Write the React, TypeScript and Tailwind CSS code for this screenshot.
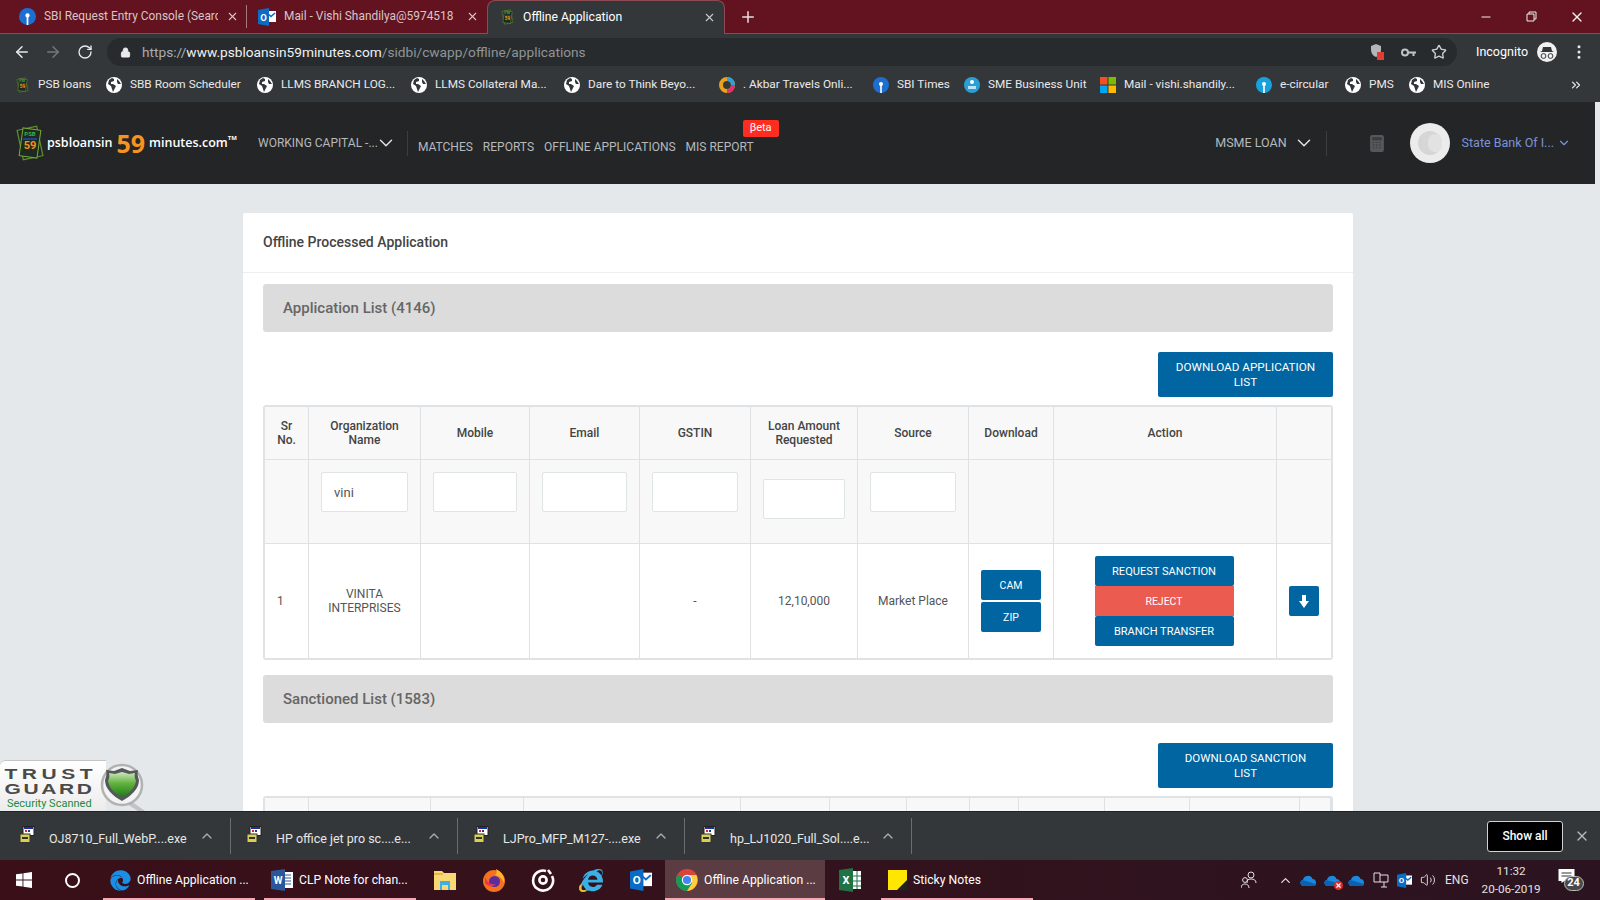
import { ArrowLeft, ArrowRight, RotateCw, Lock, Star, X, Plus, Minus, ChevronDown, ChevronUp, ChevronsRight, EllipsisVertical, Volume2 } from 'lucide-react';
import { FaEdge, FaInternetExplorer } from 'react-icons/fa';

const globe = (
    <svg width="16" height="16" viewBox="0 0 16 16" className="shrink-0">
        <circle cx="8" cy="8" r="8" fill="#fff" />
        <path d="M6 1 3 3 2 7l3 2 1 3 1 3 2-4 1-2-3-2-2 0 0-2 3-1 0-2zM11 2l2 2 2 3-3 0-1-2z" fill="#33373a" />
    </svg>
);

const PsbIcon = ({ size = 16 }: { size?: number }) => (
    <svg width={Math.round((size * 30) / 36)} height={size} viewBox="0 0 30 36" className="shrink-0">
        <rect x="5" y="3" width="20" height="30" fill="#20261f" stroke="#5f8f32" strokeWidth="1.2" transform="rotate(-12 15 18)" />
        <rect x="6" y="4" width="18" height="28" fill="#1c2a20" stroke="#7ca83e" strokeWidth="1" transform="rotate(8 15 18)" />
        <text x="15" y="11" textAnchor="middle" fontSize="6" fontWeight="700" fill="#3fae49" fontFamily="Roboto, sans-serif">PSB</text>
        <rect x="8" y="13" width="14" height="2" fill="#23408e" />
        <text x="15" y="24" textAnchor="middle" fontSize="11" fontWeight="700" fill="#f7931e" fontFamily="Roboto, sans-serif">59</text>
    </svg>
);

const SbiIcon = ({ color = '#1c6fd0', size = 16 }: { color?: string; size?: number }) => (
    <svg width={size} height={size} viewBox="0 0 16 16" className="shrink-0">
        <circle cx="8" cy="8" r="8" fill={color} />
        <circle cx="8" cy="7" r="2" fill="#fff" />
        <rect x="7.2" y="8" width="1.6" height="8" fill="#fff" />
    </svg>
);

const OutlookIcon = ({ size = 18 }: { size?: number }) => (
    <svg width={size} height={size} viewBox="0 0 18 18" className="shrink-0">
        <rect x="8" y="3" width="10" height="11" fill="#fff" />
        <path d="M9 5l4 3.5L17 5" stroke="#0a6cc4" fill="none" strokeWidth="1.6" />
        <path d="M0 2 11 0v18L0 16z" fill="#0a6cc4" />
        <text x="5.5" y="12.5" textAnchor="middle" fontSize="9.5" fontWeight="700" fill="#fff" fontFamily="Roboto, sans-serif">O</text>
    </svg>
);

const bookmarks = [
    { w: 92, icon: <PsbIcon />, label: 'PSB loans' },
    { w: 151, icon: globe, label: 'SBB Room Scheduler' },
    { w: 154, icon: globe, label: 'LLMS BRANCH LOG...' },
    { w: 153, icon: globe, label: 'LLMS Collateral Ma...' },
    { w: 155, icon: globe, label: 'Dare to Think Beyo...' },
    {
        w: 154,
        icon: (
            <svg width="16" height="16" viewBox="0 0 16 16" className="shrink-0">
                <circle cx="8" cy="8" r="6" fill="none" stroke="#e8a21c" strokeWidth="4" />
                <path d="M8 2a6 6 0 0 1 6 6" fill="none" stroke="#2f9fd8" strokeWidth="4" />
                <path d="M14 8a6 6 0 0 1-6 6" fill="none" stroke="#e52f74" strokeWidth="4" />
            </svg>
        ),
        label: '. Akbar Travels Onli...',
    },
    { w: 91, icon: <SbiIcon />, label: 'SBI Times' },
    {
        w: 136,
        icon: (
            <svg width="16" height="16" viewBox="0 0 16 16" className="shrink-0">
                <circle cx="8" cy="8" r="8" fill="#2a9fd6" />
                <circle cx="8" cy="5" r="2" fill="#fff" />
                <rect x="4" y="9" width="8" height="3" fill="#fff" opacity="0.7" />
            </svg>
        ),
        label: 'SME Business Unit',
    },
    {
        w: 156,
        icon: (
            <svg width="16" height="16" viewBox="0 0 16 16" className="shrink-0">
                <rect width="7.5" height="7.5" fill="#f25022" />
                <rect x="8.5" width="7.5" height="7.5" fill="#7fba00" />
                <rect y="8.5" width="7.5" height="7.5" fill="#00a4ef" />
                <rect x="8.5" y="8.5" width="7.5" height="7.5" fill="#ffb900" />
            </svg>
        ),
        label: 'Mail - vishi.shandily...',
    },
    { w: 89, icon: <SbiIcon color="#17a2dd" />, label: 'e-circular' },
    { w: 64, icon: globe, label: 'PMS' },
    { w: 161, icon: globe, label: 'MIS Online' },
];

const headers = [
    { w: 'w-[44px]', label: <>Sr<br />No.</> },
    { w: 'w-[112px]', label: <>Organization<br />Name</> },
    { w: 'w-[109px]', label: 'Mobile' },
    { w: 'w-[110px]', label: 'Email' },
    { w: 'w-[111px]', label: 'GSTIN' },
    { w: 'w-[107px]', label: <>Loan Amount<br />Requested</> },
    { w: 'w-[111px]', label: 'Source' },
    { w: 'w-[85px]', label: 'Download' },
    { w: 'w-[223px]', label: 'Action' },
    { w: 'w-[54px]', label: '' },
];

const sanctionCols = ['w-[44px]', 'w-[122px]', 'w-[93px]', 'w-[217px]', 'w-[89px]', 'w-[77px]', 'w-[63px]', 'w-[49px]', 'w-[86px]', 'w-[85px]', 'w-[110px]', 'w-[31px]'];

const cell = 'border-r border-b border-[#dee2e4]';
const inputCls = "block w-full h-10 bg-white border border-[#dfe4e7] rounded-[2px] px-3 text-[13px] text-[#555] outline-none";
const btn = 'flex items-center justify-center pt-px bg-[#0065a1] text-white rounded-[2px]';

function Tab({ icon, title, width, active }: { icon: React.ReactNode; title: string; width: string; active?: boolean }) {
    return (
        <div className={`flex items-center h-full shrink-0 ${width} ${active ? 'bg-[#33373a] rounded-t-lg border border-b-0 border-[#8d4a55] text-white' : 'text-[#d8c4c8]'}`}>
            <span className="flex items-center justify-center shrink-0 min-w-[16px] ml-[11px] mr-[8px]">{icon}</span>
            <span className={`flex-1 min-w-0 pt-px whitespace-nowrap overflow-hidden ${active ? 'text-[12.2px]' : 'text-[11.9px]'}`}>{title}</span>
            <X size={13} className={`shrink-0 mx-[8px] ${active ? 'text-[#c8cacc]' : 'text-[#d8c4c8]'}`} />
        </div>
    );
}

function Download({ name, width }: { name: string; width: string }) {
    return (
        <div className={`flex items-center h-[36px] shrink-0 border-r border-[#6a6e71] ${width}`}>
            <svg width="16" height="17" viewBox="0 0 16 17" className="shrink-0 ml-[15px] mr-[14px] mb-1">
                <rect x="4" y="0.5" width="11" height="9" fill="#fff" stroke="#222" />
                <rect x="5" y="1" width="9" height="2" fill="#1b2f9e" />
                <rect x="6" y="4" width="2" height="2" fill="#d23" />
                <rect x="9" y="4" width="2" height="2" fill="#23a" />
                <rect x="1" y="8" width="10" height="8.5" fill="#d9cf52" stroke="#333" />
                <rect x="3" y="11" width="6" height="2" fill="#333" />
            </svg>
            <span className="flex-1 pt-[6px] whitespace-nowrap text-[12.5px] text-[#e6e7e8]">{name}</span>
            <ChevronUp size={16} className="shrink-0 mr-[15px] text-[#a9acae]" />
        </div>
    );
}

function TaskItem({ icon, label, width, active }: { icon: React.ReactNode; label?: string; width: string; active?: boolean }) {
    return (
        <div className={`relative flex items-center justify-center h-full shrink-0 ${width} ${active ? 'bg-[#5b3c42]' : ''}`}>
            {label ? (
                <div className={`flex items-center w-full gap-[6px] ${active ? 'pl-[11px]' : 'pl-[7px]'}`}>
                    {icon}
                    <span className="whitespace-nowrap text-[12.2px] text-white">{label}</span>
                </div>
            ) : icon}
            {label && <span className="absolute left-0 right-0 bottom-0 h-[2px] bg-[#f5a9b5]" />}
        </div>
    );
}

const Cloud = ({ failed }: { failed?: boolean }) => (
    <span className="relative ml-[7px] first:ml-[10px]">
        <svg width="17" height="11" viewBox="0 0 17 11" className="block">
            <path d="M3.5 11a3.2 3.2 0 0 1-.5-6.3A5 5 0 0 1 12.5 4 3.6 3.6 0 0 1 13.5 11z" fill="#1a8ae0" />
            <path d="M3.5 11a3.2 3.2 0 0 1-1.5-6C6 6 11 7 16.5 9.5a3.6 3.6 0 0 1-3 1.5z" fill="#0a62b5" />
        </svg>
        {failed && (
            <span className="absolute right-[-2px] bottom-[-4px] flex items-center justify-center w-[9px] h-[9px] rounded-full bg-[#e02b2b]">
                <X size={7} strokeWidth={4} className="text-white" />
            </span>
        )}
    </span>
);

export default function App() {
    return (
        <div className="flex flex-col h-screen w-[1600px] overflow-hidden font-['Roboto',sans-serif]">
            {/* Tab strip */}
            <div className="flex items-center h-[34px] shrink-0 bg-[#62131f] border-b border-[#8d4a55]">
                <div className="flex items-center h-[23px] w-[247px] border-r border-[#a57a82]">
                    <Tab width="w-[247px]" title="SBI Request Entry Console (Searc" icon={<span className="ml-2 flex"><SbiIcon color="#1c6fd0" size={17} /></span>} />
                </div>
                <div className="flex items-center h-[23px] w-[240px]">
                    <Tab width="w-[240px]" title="Mail - Vishi Shandilya@5974518" icon={<OutlookIcon />} />
                </div>
                <div className="h-[34px] w-[238px] shrink-0">
                    <Tab active width="w-[238px]" title="Offline Application" icon={<PsbIcon />} />
                </div>
                <Plus size={18} className="ml-[14px] text-[#e8dfe0]" />
                <div className="flex items-center ml-auto text-[#eee]">
                    <Minus size={14} className="mr-[33px]" />
                    <svg width="11" height="11" viewBox="0 0 11 11" className="mr-[32px]">
                        <path d="M1 3h7v7H1zM3 3V1h7v7H8" fill="none" stroke="currentColor" />
                    </svg>
                    <X size={16} className="mr-[15px]" />
                </div>
            </div>

            {/* Toolbar */}
            <div className="flex items-center h-[36px] shrink-0 bg-[#33373a] text-[#e8eaed]">
                <ArrowLeft size={18} className="ml-[13px]" />
                <ArrowRight size={18} className="ml-[13px] text-[#74787b]" />
                <RotateCw size={16} className="ml-[15px]" />
                <div className="flex items-center ml-[14px] w-[1350px] h-[28px] rounded-full bg-[#282b2d]">
                    <Lock size={11} className="ml-[13px] mr-[11px] shrink-0" fill="currentColor" />
                    <span className="text-[13.7px] text-[#f0f1f2] whitespace-nowrap">
                        <span className="text-[#a9adb0]">https://</span>www.psbloansin59minutes.com<span className="text-[#8f9498]">/sidbi/cwapp/offline/applications</span>
                    </span>
                    <div className="ml-auto flex items-center">
                        <svg width="14" height="18" viewBox="0 0 14 18" className="mr-[17px]">
                            <path d="M6 1 1 3v4c0 3 2 6 5 7 3-1 5-4 5-7V3z" fill="#b4b7ba" />
                            <rect x="7" y="9" width="7" height="8" fill="#e23d32" />
                        </svg>
                        <svg width="15" height="9" viewBox="0 0 15 9" className="mr-[15px]">
                            <circle cx="4" cy="4.5" r="3" fill="none" stroke="#c0c3c5" strokeWidth="2" />
                            <path d="M7 3.5h8v2h-1.5V8h-2V5.5H7z" fill="#c0c3c5" />
                        </svg>
                        <Star size={16} className="mr-[10px] text-[#cfd1d3]" />
                    </div>
                </div>
                <span className="ml-[19px] text-[12.5px] text-white">Incognito</span>
                <svg width="20" height="20" viewBox="0 0 20 20" className="ml-[9px]">
                    <circle cx="10" cy="10" r="10" fill="#f1f1f1" />
                    <path d="M3 10h14l-2-1-1-4H6L5 9z" fill="#33373a" />
                    <circle cx="6.5" cy="14" r="2.4" fill="none" stroke="#33373a" />
                    <circle cx="13.5" cy="14" r="2.4" fill="none" stroke="#33373a" />
                </svg>
                <EllipsisVertical size={18} className="ml-[13px]" />
            </div>

            {/* Bookmarks */}
            <div className="flex items-center h-[32px] pb-[3px] shrink-0 bg-[#33373a] pl-[14px]">
                {bookmarks.map((b) => (
                    <div key={b.label} className="flex items-center gap-[8px] shrink-0" style={{ width: b.w }}>
                        <span className="flex justify-center w-[16px] shrink-0">{b.icon}</span>
                        <span className="text-[11.8px] text-[#e8eaed] whitespace-nowrap">{b.label}</span>
                    </div>
                ))}
                <ChevronsRight size={14} className="ml-[-1px] text-[#e8eaed]" />
            </div>

            {/* Page */}
            <main className="relative flex-1 min-h-0 overflow-hidden bg-[#e4e8eb]">
                <header className="flex items-center h-[82px] mr-[5px] bg-[#232527] relative">
                    <div className="flex items-center ml-[15px] w-[243px] font-['Open_Sans',sans-serif]">
                        <PsbIcon size={36} />
                        <span className="text-[12.5px] font-semibold text-white ml-[2px]">psbloansin</span>
                        <span className="text-[25px] leading-none font-bold text-[#f7931e] ml-[4px]">59</span>
                        <span className="text-[12.5px] font-semibold text-white ml-[4px]">minutes.com</span>
                        <span className="text-[6px] text-white font-bold mb-[10px]">TM</span>
                    </div>
                    <span className="text-[12px] text-[#b7b9bb] whitespace-nowrap">WORKING CAPITAL -...</span>
                    <ChevronDown size={22} strokeWidth={1.6} className="text-[#e2e3e4] ml-[-3px] shrink-0" />
                    <div className="w-px h-[25px] bg-[#3b3e41] ml-[10px]" />
                    <nav className="flex items-center gap-[10px] ml-[10px] mt-[7px] text-[12px] text-[#b7b9bb] whitespace-nowrap">
                        <span>MATCHES</span>
                        <span>REPORTS</span>
                        <span>OFFLINE APPLICATIONS</span>
                        <span className="relative">
                            MIS REPORT
                            <span className="absolute left-[57px] top-[-18px] w-[36px] h-[17px] flex items-center justify-center rounded-[2px] bg-[#ff2d20] text-white text-[11px]">βeta</span>
                        </span>
                    </nav>
                    <span className="ml-auto text-[12.5px] text-[#b7b9bb]">MSME LOAN</span>
                    <ChevronDown size={22} strokeWidth={1.6} className="ml-[6px] text-[#e2e3e4] shrink-0" />
                    <div className="w-px h-[25px] bg-[#3b3e41] ml-[11px]" />
                    <svg width="14" height="17" viewBox="0 0 13 16" className="ml-[43px] shrink-0">
                        <rect width="13" height="16" rx="2" fill="#55585a" />
                        <rect x="2" y="2" width="9" height="3" fill="#3a3d3f" />
                        <path d="M2.5 7h8M2.5 9.5h8M2.5 12h8" stroke="#3a3d3f" strokeDasharray="1.5 1.5" />
                    </svg>
                    <div className="relative w-10 h-10 ml-[26px] rounded-full bg-[#ececec] shrink-0">
                        <span className="absolute left-2 top-2 w-6 h-6 rounded-full bg-[#d6d6d6]" />
                        <span className="absolute left-[18px] top-[11px] w-[14px] h-[18px] rounded-full bg-[#e2e2e2]" />
                    </div>
                    <span className="ml-[12px] text-[12.5px] text-[#7c93d6] whitespace-nowrap">State Bank Of I...</span>
                    <ChevronDown size={14} className="ml-[3px] mr-[24px] text-[#7c93d6] shrink-0" />
                </header>

                <section className="ml-[243px] w-[1110px] mt-[29px] bg-white rounded-[2px]">
                    <div className="flex items-center h-[60px] pl-5 border-b border-[#eceeef]">
                        <h1 className="text-[14px] font-medium text-[#444]">Offline Processed Application</h1>
                    </div>
                    <div className="px-5">
                        <div className="flex items-center h-[48px] mt-[11px] pl-5 rounded-[3px] bg-[#dcdcdc]">
                            <h2 className="text-[15px] font-medium text-[#666]">Application List (4146)</h2>
                        </div>
                        <div className="flex justify-end mt-5">
                            <button className={`${btn} w-[175px] h-[45px] leading-[15px] px-[12px] pt-[2px] text-center text-[11.7px]`}>DOWNLOAD APPLICATION LIST</button>
                        </div>
                        <div className="mt-[8px] border-2 border-[#dfe3e5] rounded-[3px]">
                            <table className="table-fixed w-full border-separate border-spacing-0 text-[12px] text-[#555]">
                                <colgroup>
                                    {headers.map((h, i) => <col key={i} className={h.w} />)}
                                </colgroup>
                                <thead>
                                    <tr className="h-[53px] bg-[#f8f8f8]">
                                        {headers.map((h, i) => (
                                            <th key={i} className={`${cell} ${i === 9 ? 'border-r-0' : ''} font-medium text-[12px] leading-[14px] text-[#444] text-center`}>{h.label}</th>
                                        ))}
                                    </tr>
                                    <tr className="h-[84px] bg-[#f8f8f8]">
                                        <td className={cell} />
                                        <td className={`${cell} p-3 align-top`}><input readOnly value="vini" className={inputCls} /></td>
                                        <td className={`${cell} p-3 align-top`}><input readOnly className={inputCls} /></td>
                                        <td className={`${cell} p-3 align-top`}><input readOnly className={inputCls} /></td>
                                        <td className={`${cell} p-3 align-top`}><input readOnly className={inputCls} /></td>
                                        <td className={`${cell} px-3 pt-[19px] pb-3 align-top`}><input readOnly className={inputCls} /></td>
                                        <td className={`${cell} p-3 align-top`}><input readOnly className={inputCls} /></td>
                                        <td className={cell} />
                                        <td className={cell} />
                                        <td className="border-b border-[#dee2e4]" />
                                    </tr>
                                </thead>
                                <tbody>
                                    <tr className="h-[114px] bg-white text-center leading-[14px]">
                                        <td className="border-r border-[#dee2e4] pl-3 text-left">1</td>
                                        <td className="border-r border-[#dee2e4]">VINITA<br />INTERPRISES</td>
                                        <td className="border-r border-[#dee2e4]" />
                                        <td className="border-r border-[#dee2e4]" />
                                        <td className="border-r border-[#dee2e4]">-</td>
                                        <td className="border-r border-[#dee2e4]">12,10,000</td>
                                        <td className="border-r border-[#dee2e4]">Market Place</td>
                                        <td className="border-r border-[#dee2e4]">
                                            <div className="flex flex-col items-center gap-[2px]">
                                                <button className={`${btn} w-[60px] h-[30px] text-[10.5px]`}>CAM</button>
                                                <button className={`${btn} w-[60px] h-[30px] text-[10.5px]`}>ZIP</button>
                                            </div>
                                        </td>
                                        <td className="border-r border-[#dee2e4]">
                                            <div className="flex flex-col items-center pr-[2px]">
                                                <button className={`${btn} w-[139px] h-[30px] text-[11.1px]`}>REQUEST SANCTION</button>
                                                <button className="flex items-center justify-center pt-px w-[139px] h-[30px] bg-[#ec5b4f] text-white text-[10.5px]">REJECT</button>
                                                <button className={`${btn} w-[139px] h-[30px] text-[11px]`}>BRANCH TRANSFER</button>
                                            </div>
                                        </td>
                                        <td>
                                            <button className="flex items-center justify-center w-[30px] h-[30px] mx-auto rounded-[2px] bg-[#0065a1]">
                                                <svg width="10" height="13" viewBox="0 0 10 13">
                                                    <path d="M3 0h4v6h3l-5 7-5-7h3z" fill="#fff" />
                                                </svg>
                                            </button>
                                        </td>
                                    </tr>
                                </tbody>
                            </table>
                        </div>

                        <div className="flex items-center h-[48px] mt-[15px] pl-5 rounded-[3px] bg-[#dcdcdc]">
                            <h2 className="text-[15px] font-medium text-[#666]">Sanctioned List (1583)</h2>
                        </div>
                        <div className="flex justify-end mt-5">
                            <button className={`${btn} w-[175px] h-[45px] leading-[15px] px-6 pt-[2px] text-center text-[11.5px]`}>DOWNLOAD SANCTION LIST</button>
                        </div>
                        <div className="mt-[8px] border-2 border-[#dfe3e5] rounded-[3px]">
                            <table className="table-fixed w-full border-separate border-spacing-0">
                                <colgroup>
                                    {sanctionCols.map((w, i) => <col key={i} className={w} />)}
                                </colgroup>
                                <tbody>
                                    <tr className="h-[52px] bg-[#f8f8f8]">
                                        {sanctionCols.map((_, i) => <td key={i} className={cell} />)}
                                    </tr>
                                </tbody>
                            </table>
                        </div>
                    </div>
                </section>

                {/* Trust badge */}
                <div className="absolute left-0 bottom-0 w-[148px] h-[52px] font-['Liberation_Sans',sans-serif]">
                    <div className="absolute left-0 top-[1px] w-[106px] h-[51px] rounded-tl-[6px] bg-gradient-to-b from-white to-[#ececec] border-t border-[#c4c4c4] leading-none">
                        <div className="pl-[3px] pt-[6px] text-[14px] h-[21px] font-bold tracking-[3px] text-[#4a4a4a] origin-left scale-x-150 whitespace-nowrap">TRUST</div>
                        <div className="pl-[3px] text-[14px] h-[16px] font-bold tracking-[1.75px] text-[#4a4a4a] origin-left scale-x-150 whitespace-nowrap">GUARD</div>
                        <div className="pl-[7px] text-[11px] text-[#1c8a3a] whitespace-nowrap font-['Roboto',sans-serif]">Security Scanned</div>
                    </div>
                    <svg width="50" height="52" viewBox="0 0 50 52" className="absolute left-[98px] top-0">
                        <defs>
                            <linearGradient id="shieldGreen" x1="0" y1="0" x2="0" y2="1">
                                <stop offset="0" stopColor="#cfe8c0" />
                                <stop offset="0.45" stopColor="#62b33e" />
                                <stop offset="1" stopColor="#1f7a1c" />
                            </linearGradient>
                        </defs>
                        <path d="M33 42 47 52H40L29 45z" fill="#c2c4c4" />
                        <circle cx="24" cy="26" r="20" fill="#f2f3f3" stroke="#b1b3b3" strokeWidth="2.5" />
                        <path d="M24 9 16 12 8 11c1 4 0 7-1 10 0 9 8 16 17 21 9-5 17-12 17-21-1-3-2-6-1-10l-8 1z" fill="#55585a" />
                        <path d="M24 13 17 15l-6-1c1 3 0 6-1 8 1 7 7 13 14 16 7-3 13-9 14-16-1-2-2-5-1-8l-6 1z" fill="url(#shieldGreen)" />
                    </svg>
                </div>
            </main>

            {/* Downloads bar */}
            <div className="relative flex items-center h-[49px] shrink-0 bg-[#33373a] border-t border-[#222] pl-[4px]">
                <Download width="w-[227px]" name="OJ8710_Full_WebP....exe" />
                <Download width="w-[227px]" name="HP office jet pro sc....e..." />
                <Download width="w-[227px]" name="LJPro_MFP_M127-....exe" />
                <Download width="w-[227px]" name="hp_LJ1020_Full_Sol....e..." />
                <button className="ml-auto w-[76px] h-[31px] rounded-[3px] bg-black border border-[#d0d2d3] text-white text-[12px] font-medium">Show all</button>
                <X size={16} className="ml-[11px] mr-[10px] text-[#b4b7b9]" />
            </div>

            {/* Taskbar */}
            <div className="flex items-center h-[40px] shrink-0 bg-gradient-to-r from-[#3a0f18] to-[#2b1420] text-white">
                <TaskItem width="w-[48px]" icon={
                    <svg width="16" height="16" viewBox="0 0 16 16"><path d="M0 2.3 6.5 1.4V7.5H0zM7.4 1.3 16 0V7.5H7.4zM0 8.4H6.5V14.6L0 13.7zM7.4 8.4H16V16L7.4 14.7z" fill="#fff" /></svg>
                } />
                <TaskItem width="w-[48px]" icon={<span className="block w-[15px] h-[15px] rounded-full border-2 border-white" />} />
                <div className="w-[7px]" />
                <TaskItem width="w-[152px]" label="Offline Application ..." icon={<FaEdge size={21} color="#1a8fe3" className="shrink-0" />} />
                <div className="w-[9px]" />
                <TaskItem width="w-[152px]" label="CLP Note for chan..." icon={
                    <svg width="22" height="22" viewBox="0 0 22 22"><rect x="8" y="3" width="14" height="16" fill="#fff" /><path d="M13 6h7M13 9h7M13 12h7M13 15h7" stroke="#2b579a" /><path d="M0 2 14 0V22L0 20z" fill="#2b579a" /><text x="7" y="15" textAnchor="middle" fontSize="10" fontWeight="700" fill="#fff" fontFamily="Roboto, sans-serif">W</text></svg>
                } />
                <div className="w-[4px]" />
                <TaskItem width="w-[49px]" icon={
                    <svg width="22" height="20" viewBox="0 0 22 20"><path d="M0 1h8l2 2h12v17H0z" fill="#f8d775" /><rect x="0" y="3" width="9" height="2" fill="#e5b64a" /><path d="M6 11h10v9h-2v-5H8v5H6z" fill="#3fb0e6" /></svg>
                } />
                <TaskItem width="w-[49px]" icon={
                    <svg width="22" height="24" viewBox="0 0 22 24"><circle cx="11" cy="13" r="11" fill="#f4711f" /><circle cx="11.5" cy="13.5" r="5.5" fill="#5a2d9c" /><path d="M13 1c6 3 9 8 8 14-2-5-5-7-9-8 2-1 2-3 1-6z" fill="#ffb52e" /><path d="M2 9c2 5 5 8 11 7-2 3-8 3-11-1z" fill="#e8325a" /></svg>
                } />
                <TaskItem width="w-[49px]" icon={
                    <svg width="24" height="24" viewBox="0 0 24 24" fill="none" stroke="#fff"><path d="M15 3a10 10 0 1 0 6 5" strokeWidth="2.6" /><circle cx="12" cy="12" r="3.6" strokeWidth="2.6" /><path d="M17 2l3 4" strokeWidth="2.6" /></svg>
                } />
                <TaskItem width="w-[49px]" icon={
                    <span className="relative flex">
                        <FaInternetExplorer size={23} color="#3ab0e8" />
                        <span className="absolute left-[-1px] bottom-0 w-[8px] h-[8px] rounded-full border-b-2 border-l-2 border-[#e9b92f]" />
                    </span>
                } />
                <TaskItem width="w-[49px]" icon={<OutlookIcon size={22} />} />
                <TaskItem active width="w-[160px]" label="Offline Application ..." icon={
                    <svg width="22" height="22" viewBox="0 0 22 22" className="shrink-0">
                        <circle cx="11" cy="11" r="11" fill="#db4437" />
                        <path d="M11 11 1.5 5.5A11 11 0 0 0 11 22l5.5-8z" fill="#0f9d58" />
                        <path d="M11 6h9.4A11 11 0 0 1 11 22l5-8z" fill="#ffcd40" />
                        <circle cx="11" cy="11" r="5.2" fill="#fff" />
                        <circle cx="11" cy="11" r="4.1" fill="#4285f4" />
                    </svg>
                } />
                <TaskItem width="w-[50px]" icon={
                    <svg width="24" height="24" viewBox="0 0 24 24"><rect x="8" y="3" width="15" height="18" fill="#fff" /><path d="M14 3v18M19 3v18M8 8h15M8 13h15M8 18h15" stroke="#217346" /><path d="M1 2 15 0V24L1 22z" fill="#217346" /><text x="8" y="16" textAnchor="middle" fontSize="11" fontWeight="700" fill="#fff" fontFamily="Roboto, sans-serif">X</text></svg>
                } />
                <div className="w-[6px]" />
                <TaskItem width="w-[152px]" label="Sticky Notes" icon={
                    <svg width="19" height="20" viewBox="0 0 19 20" className="shrink-0"><rect width="19" height="20" fill="#ffe600" /><path d="M9 20 19 10v10z" fill="#222" /></svg>
                } />
                <svg width="16" height="18" viewBox="0 0 16 18" fill="none" stroke="#e6e0e2" className="ml-[208px]">
                    <circle cx="10" cy="4" r="3" /><path d="M6 12c0-3 1-4 4-4s5 1 5 4" /><circle cx="4" cy="9" r="2.4" /><path d="M0 17c0-3 2-4 4-4s4 1 4 4" />
                </svg>
                <ChevronUp size={15} className="ml-[21px] text-[#e6e0e2]" />
                <Cloud />
                <Cloud failed />
                <Cloud />
                <svg width="16" height="16" viewBox="0 0 16 16" fill="none" stroke="#e6e0e2" className="ml-[8px]"><path d="M1 1h6v9H1zM7 3h8v7H7M8 15h6M11 10v5" /></svg>
                <span className="ml-[8px]"><OutlookIcon size={15} /></span>
                <Volume2 size={16} strokeWidth={1.4} className="ml-[8px] text-[#e6e0e2]" />
                <span className="ml-[9px] text-[12px] text-[#e6e0e2]">ENG</span>
                <div className="ml-[13px] text-center text-[11.7px] leading-[18px] text-[#e6e0e2] whitespace-nowrap">
                    <div>11:32</div>
                    <div>20-06-2019</div>
                </div>
                <div className="relative ml-[17px] w-[20px] h-[22px]">
                    <svg width="17" height="14" viewBox="0 0 16 14"><path d="M0 0h16v12H6l-3 2v-2H0z" fill="#fff" /><path d="M3 4h10M3 7h10" stroke="#333" /></svg>
                    <span className="absolute left-[6px] top-[7px] flex items-center justify-center w-[20px] h-[15px] rounded-full bg-[#4a4a4a] border border-[#bbb] text-[11px] font-bold">24</span>
                </div>
            </div>
        </div>
    );
}
